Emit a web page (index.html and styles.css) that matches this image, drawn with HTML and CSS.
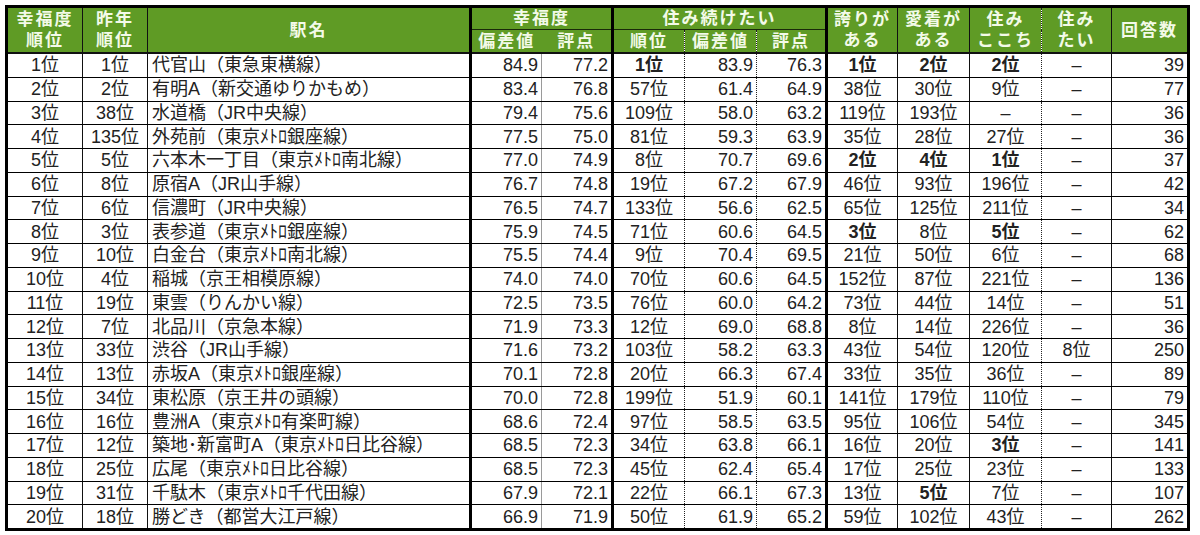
FILE: index.html
```html
<!DOCTYPE html>
<html lang="ja">
<head>
<meta charset="utf-8">
<title>住み続けたい街ランキング</title>
<link rel="stylesheet" href="styles.css">
</head>
<body>
<table class="rank">
<colgroup>
<col class="w1"><col class="w2"><col class="w3"><col class="w4"><col class="w5"><col class="w6"><col class="w7"><col class="w8"><col class="w9"><col class="w10"><col class="w11"><col class="w12"><col class="w13">
</colgroup>
<thead>
<tr class="h1">
<th rowspan="2" class="c1">幸福度<br>順位</th>
<th rowspan="2" class="c2">昨年<br>順位</th>
<th rowspan="2" class="c3">駅名</th>
<th colspan="2" class="c5 top">幸福度</th>
<th colspan="3" class="c8 top">住み続けたい</th>
<th rowspan="2" class="c9">誇りが<br>ある</th>
<th rowspan="2" class="c10">愛着が<br>ある</th>
<th rowspan="2" class="c11">住み<br>ここち</th>
<th rowspan="2" class="c12">住み<br>たい</th>
<th rowspan="2" class="c13">回答数</th>
</tr>
<tr class="h2">
<th class="c4h">偏差値</th>
<th class="c5">評点</th>
<th class="c6">順位</th>
<th class="c7">偏差値</th>
<th class="c8">評点</th>
</tr>
</thead>
<tbody>
<tr><td class="c1">1位</td><td class="c2">1位</td><td class="c3">代官山（東急東横線）</td><td class="c4">84.9</td><td class="c5">77.2</td><td class="c6 b">1位</td><td class="c7">83.9</td><td class="c8">76.3</td><td class="c9 b">1位</td><td class="c10 b">2位</td><td class="c11 b">2位</td><td class="c12">–</td><td class="c13">39</td></tr>
<tr><td class="c1">2位</td><td class="c2">2位</td><td class="c3">有明A（新交通ゆりかもめ）</td><td class="c4">83.4</td><td class="c5">76.8</td><td class="c6">57位</td><td class="c7">61.4</td><td class="c8">64.9</td><td class="c9">38位</td><td class="c10">30位</td><td class="c11">9位</td><td class="c12">–</td><td class="c13">77</td></tr>
<tr><td class="c1">3位</td><td class="c2">38位</td><td class="c3">水道橋（JR中央線）</td><td class="c4">79.4</td><td class="c5">75.6</td><td class="c6">109位</td><td class="c7">58.0</td><td class="c8">63.2</td><td class="c9">119位</td><td class="c10">193位</td><td class="c11">–</td><td class="c12">–</td><td class="c13">36</td></tr>
<tr><td class="c1">4位</td><td class="c2">135位</td><td class="c3">外苑前（東京ﾒﾄﾛ銀座線）</td><td class="c4">77.5</td><td class="c5">75.0</td><td class="c6">81位</td><td class="c7">59.3</td><td class="c8">63.9</td><td class="c9">35位</td><td class="c10">28位</td><td class="c11">27位</td><td class="c12">–</td><td class="c13">36</td></tr>
<tr><td class="c1">5位</td><td class="c2">5位</td><td class="c3">六本木一丁目（東京ﾒﾄﾛ南北線）</td><td class="c4">77.0</td><td class="c5">74.9</td><td class="c6">8位</td><td class="c7">70.7</td><td class="c8">69.6</td><td class="c9 b">2位</td><td class="c10 b">4位</td><td class="c11 b">1位</td><td class="c12">–</td><td class="c13">37</td></tr>
<tr><td class="c1">6位</td><td class="c2">8位</td><td class="c3">原宿A（JR山手線）</td><td class="c4">76.7</td><td class="c5">74.8</td><td class="c6">19位</td><td class="c7">67.2</td><td class="c8">67.9</td><td class="c9">46位</td><td class="c10">93位</td><td class="c11">196位</td><td class="c12">–</td><td class="c13">42</td></tr>
<tr><td class="c1">7位</td><td class="c2">6位</td><td class="c3">信濃町（JR中央線）</td><td class="c4">76.5</td><td class="c5">74.7</td><td class="c6">133位</td><td class="c7">56.6</td><td class="c8">62.5</td><td class="c9">65位</td><td class="c10">125位</td><td class="c11">211位</td><td class="c12">–</td><td class="c13">34</td></tr>
<tr><td class="c1">8位</td><td class="c2">3位</td><td class="c3">表参道（東京ﾒﾄﾛ銀座線）</td><td class="c4">75.9</td><td class="c5">74.5</td><td class="c6">71位</td><td class="c7">60.6</td><td class="c8">64.5</td><td class="c9 b">3位</td><td class="c10">8位</td><td class="c11 b">5位</td><td class="c12">–</td><td class="c13">62</td></tr>
<tr><td class="c1">9位</td><td class="c2">10位</td><td class="c3">白金台（東京ﾒﾄﾛ南北線）</td><td class="c4">75.5</td><td class="c5">74.4</td><td class="c6">9位</td><td class="c7">70.4</td><td class="c8">69.5</td><td class="c9">21位</td><td class="c10">50位</td><td class="c11">6位</td><td class="c12">–</td><td class="c13">68</td></tr>
<tr><td class="c1">10位</td><td class="c2">4位</td><td class="c3">稲城（京王相模原線）</td><td class="c4">74.0</td><td class="c5">74.0</td><td class="c6">70位</td><td class="c7">60.6</td><td class="c8">64.5</td><td class="c9">152位</td><td class="c10">87位</td><td class="c11">221位</td><td class="c12">–</td><td class="c13">136</td></tr>
<tr><td class="c1">11位</td><td class="c2">19位</td><td class="c3">東雲（りんかい線）</td><td class="c4">72.5</td><td class="c5">73.5</td><td class="c6">76位</td><td class="c7">60.0</td><td class="c8">64.2</td><td class="c9">73位</td><td class="c10">44位</td><td class="c11">14位</td><td class="c12">–</td><td class="c13">51</td></tr>
<tr><td class="c1">12位</td><td class="c2">7位</td><td class="c3">北品川（京急本線）</td><td class="c4">71.9</td><td class="c5">73.3</td><td class="c6">12位</td><td class="c7">69.0</td><td class="c8">68.8</td><td class="c9">8位</td><td class="c10">14位</td><td class="c11">226位</td><td class="c12">–</td><td class="c13">36</td></tr>
<tr><td class="c1">13位</td><td class="c2">33位</td><td class="c3">渋谷（JR山手線）</td><td class="c4">71.6</td><td class="c5">73.2</td><td class="c6">103位</td><td class="c7">58.2</td><td class="c8">63.3</td><td class="c9">43位</td><td class="c10">54位</td><td class="c11">120位</td><td class="c12">8位</td><td class="c13">250</td></tr>
<tr><td class="c1">14位</td><td class="c2">13位</td><td class="c3">赤坂A（東京ﾒﾄﾛ銀座線）</td><td class="c4">70.1</td><td class="c5">72.8</td><td class="c6">20位</td><td class="c7">66.3</td><td class="c8">67.4</td><td class="c9">33位</td><td class="c10">35位</td><td class="c11">36位</td><td class="c12">–</td><td class="c13">89</td></tr>
<tr><td class="c1">15位</td><td class="c2">34位</td><td class="c3">東松原（京王井の頭線）</td><td class="c4">70.0</td><td class="c5">72.8</td><td class="c6">199位</td><td class="c7">51.9</td><td class="c8">60.1</td><td class="c9">141位</td><td class="c10">179位</td><td class="c11">110位</td><td class="c12">–</td><td class="c13">79</td></tr>
<tr><td class="c1">16位</td><td class="c2">16位</td><td class="c3">豊洲A（東京ﾒﾄﾛ有楽町線）</td><td class="c4">68.6</td><td class="c5">72.4</td><td class="c6">97位</td><td class="c7">58.5</td><td class="c8">63.5</td><td class="c9">95位</td><td class="c10">106位</td><td class="c11">54位</td><td class="c12">–</td><td class="c13">345</td></tr>
<tr><td class="c1">17位</td><td class="c2">12位</td><td class="c3">築地･新富町A（東京ﾒﾄﾛ日比谷線）</td><td class="c4">68.5</td><td class="c5">72.3</td><td class="c6">34位</td><td class="c7">63.8</td><td class="c8">66.1</td><td class="c9">16位</td><td class="c10">20位</td><td class="c11 b">3位</td><td class="c12">–</td><td class="c13">141</td></tr>
<tr><td class="c1">18位</td><td class="c2">25位</td><td class="c3">広尾（東京ﾒﾄﾛ日比谷線）</td><td class="c4">68.5</td><td class="c5">72.3</td><td class="c6">45位</td><td class="c7">62.4</td><td class="c8">65.4</td><td class="c9">17位</td><td class="c10">25位</td><td class="c11">23位</td><td class="c12">–</td><td class="c13">133</td></tr>
<tr><td class="c1">19位</td><td class="c2">31位</td><td class="c3">千駄木（東京ﾒﾄﾛ千代田線）</td><td class="c4">67.9</td><td class="c5">72.1</td><td class="c6">22位</td><td class="c7">66.1</td><td class="c8">67.3</td><td class="c9">13位</td><td class="c10 b">5位</td><td class="c11">7位</td><td class="c12">–</td><td class="c13">107</td></tr>
<tr><td class="c1">20位</td><td class="c2">18位</td><td class="c3">勝どき（都営大江戸線）</td><td class="c4">66.9</td><td class="c5">71.9</td><td class="c6">50位</td><td class="c7">61.9</td><td class="c8">65.2</td><td class="c9">59位</td><td class="c10">102位</td><td class="c11">43位</td><td class="c12">–</td><td class="c13">262</td></tr>
</tbody>
</table>
</body>
</html>
```
FILE: styles.css
```css
html, body {
  margin: 0;
  padding: 0;
  background: #ffffff;
}
body {
  padding: 5px 0 0 5px;
  font-family: "Liberation Sans", "Noto Sans CJK JP", sans-serif;
  color: #222222;
}
.rank {
  border-collapse: collapse;
  table-layout: fixed;
  width: 1185px;
  border: 3px solid #000000;
}
.w1 { width: 76px; }
.w2 { width: 65px; }
.w3 { width: 323px; }
.w4 { width: 71px; }
.w5 { width: 71px; }
.w6 { width: 72px; }
.w7 { width: 72px; }
.w8 { width: 70px; }
.w9 { width: 71px; }
.w10 { width: 72px; }
.w11 { width: 72px; }
.w12 { width: 70px; }
.w13 { width: 77px; }

.rank th {
  background: #5f9b25;
  color: #f3fae8;
  font-weight: bold;
  font-size: 17px;
  letter-spacing: 2px;
  line-height: 21px;
  padding: 0;
  text-align: center;
  vertical-align: middle;
  white-space: nowrap;
  overflow: hidden;
}
.rank thead tr.h1 th { height: 21px; }
.rank thead tr.h2 th { height: 22px; }
.rank thead tr.h2 th,
.rank thead tr.h1 th[rowspan] { border-bottom: 2px solid #111111; }
.rank thead th.top { border-bottom: 1px solid #1a2a0a; }
.rank thead th.c3 { text-align: center; }

.rank td {
  height: 22.75px;
  padding: 0 3px;
  font-size: 18px;
  line-height: 20px;
  border-bottom: 1px solid #000000;
  white-space: nowrap;
  overflow: hidden;
  vertical-align: middle;
}
.rank td.b { font-weight: bold; }

.c1 { border-right: 1px solid #111111; text-align: center; }
.c2 { border-right: 1px solid #111111; text-align: center; }
.c3 { border-right: 3px solid #000000; text-align: left; }
td.c3 { padding-left: 4px; }
.c4 { border-right: 1px solid #9a9a9a; text-align: right; }
.c5 { border-right: 3px solid #000000; text-align: right; }
.c6 { border-right: 1px dotted #222222; text-align: center; }
.c7 { border-right: 1px dotted #222222; text-align: right; }
.c8 { border-right: 3px solid #000000; text-align: right; }
.c9 { border-right: 1px solid #111111; text-align: center; }
.c10 { border-right: 1px solid #111111; text-align: center; }
.c11 { border-right: 1px dotted #222222; text-align: center; }
.c12 { border-right: 1px solid #111111; text-align: center; }
.c13 { text-align: right; }
th.c4h, th.c5, th.c6, th.c7, th.c8 { text-align: center; }
```
